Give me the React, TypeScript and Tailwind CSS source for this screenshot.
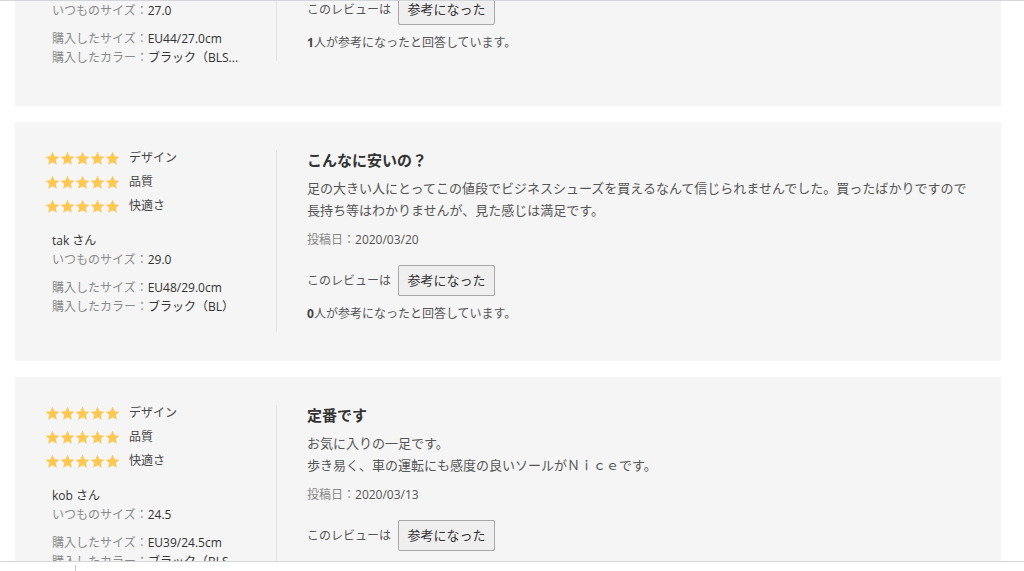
import React from 'react';

type Review = {
  name: string;
  usualSize: string;
  boughtSize: string;
  color: string;
  title: string;
  body: string[];
  date: string;
  helpful: number;
};

const reviews: Review[] = [
  {
    name: 'sho',
    usualSize: '27.0',
    boughtSize: 'EU44/27.0cm',
    color: 'ブラック（BLS...',
    title: '履きやすいです',
    body: ['幅も丁度よく、長時間歩いても疲れにくいです。'],
    date: '2020/03/24',
    helpful: 1,
  },
  {
    name: 'tak',
    usualSize: '29.0',
    boughtSize: 'EU48/29.0cm',
    color: 'ブラック（BL）',
    title: 'こんなに安いの？',
    body: [
      '足の大きい人にとってこの値段でビジネスシューズを買えるなんて信じられませんでした。買ったばかりですので',
      '長持ち等はわかりませんが、見た感じは満足です。',
    ],
    date: '2020/03/20',
    helpful: 0,
  },
  {
    name: 'kob',
    usualSize: '24.5',
    boughtSize: 'EU39/24.5cm',
    color: 'ブラック（BLS...',
    title: '定番です',
    body: ['お気に入りの一足です。', '歩き易く、車の運転にも感度の良いソールがＮｉｃｅです。'],
    date: '2020/03/13',
    helpful: 0,
  },
];

const ratingLabels = ['デザイン', '品質', '快適さ'];

function Stars() {
  return (
    <div className="flex">
      {[0, 1, 2, 3, 4].map((i) => (
        <svg key={i} width="15" height="15" viewBox="0 0 24 24">
          <path
            d="M12 1.2l3.3 7.2 7.8.7-5.9 5.2 1.8 7.7L12 18.1l-7 3.9 1.8-7.7-5.9-5.2 7.8-.7z"
            fill="#fdc852"
          />
        </svg>
      ))}
    </div>
  );
}

function ReviewCard({ review }: { review: Review }) {
  return (
    <div className="flex bg-[#f5f5f5] pl-[30px] pt-[28px] pb-[29px] items-start">
      <div className="w-[231px] shrink-0 pb-[10px]">
        <div className="flex flex-col gap-[8px]">
          {ratingLabels.map((label) => (
            <div key={label} className="flex items-center h-[16px] gap-[9px]">
              <Stars />
              <span className="text-[12px] text-[#444]">{label}</span>
            </div>
          ))}
        </div>
        <div className="pl-[7px] text-[12px] leading-[19px]">
          <div className="mt-[17px] text-[#333]">{review.name} さん</div>
          <div>
            <span className="text-[#8a8a8a]">いつものサイズ：</span>
            <span className="text-[#333]">{review.usualSize}</span>
          </div>
          <div className="mt-[9px]">
            <span className="text-[#8a8a8a]">購入したサイズ：</span>
            <span className="text-[#333]">{review.boughtSize}</span>
          </div>
          <div>
            <span className="text-[#8a8a8a]">購入したカラー：</span>
            <span className="text-[#333]">{review.color}</span>
          </div>
        </div>
      </div>
      <div className="border-l border-[#e3e3e3] pl-[30px] pb-[9px] flex-1">
        <h3 className="text-[15px] leading-[20px] font-bold text-[#333]">{review.title}</h3>
        <div className="mt-[7px] text-[13px] leading-[22px] text-[#555]">
          {review.body.map((line, i) => (
            <div key={i}>{line}</div>
          ))}
        </div>
        <div className="mt-[10px] text-[12px] leading-[18px]">
          <span className="text-[#888]">投稿日：</span>
          <span className="text-[#555]">{review.date}</span>
        </div>
        <div className="mt-[16px] flex items-center gap-[7px]">
          <span className="text-[12px] text-[#555]">このレビューは</span>
          <button className="h-[31px] w-[97px] border border-[#a8a8a8] bg-[#efefef] rounded-[2px] text-[13px] text-[#333]">
            参考になった
          </button>
        </div>
        <div className="mt-[9px] text-[12px] leading-[18px] text-[#555]">
          <span className="font-bold text-[#444]">{review.helpful}</span>人が参考になったと回答しています。
        </div>
      </div>
    </div>
  );
}

export default function App() {
  return (
    <div
      className="relative h-[571px] overflow-hidden bg-white"
      style={{ fontFamily: '"Open Sans", "Noto Sans CJK JP", sans-serif' }}
    >
      <div className="-mt-[127px] ml-[15px] w-[986px] flex flex-col gap-[16px]">
        {reviews.map((r) => (
          <ReviewCard key={r.name} review={r} />
        ))}
      </div>
      <div className="absolute top-0 left-0 right-0 h-[1px] bg-[#d3d7db]" />
      <div className="absolute bottom-0 left-0 right-0 h-[10px] bg-white border-t border-[#d6d6d6]">
        <div className="ml-[75px] mt-[3px] w-[1px] h-[7px] bg-[#c8c8c8]" />
      </div>
    </div>
  );
}
